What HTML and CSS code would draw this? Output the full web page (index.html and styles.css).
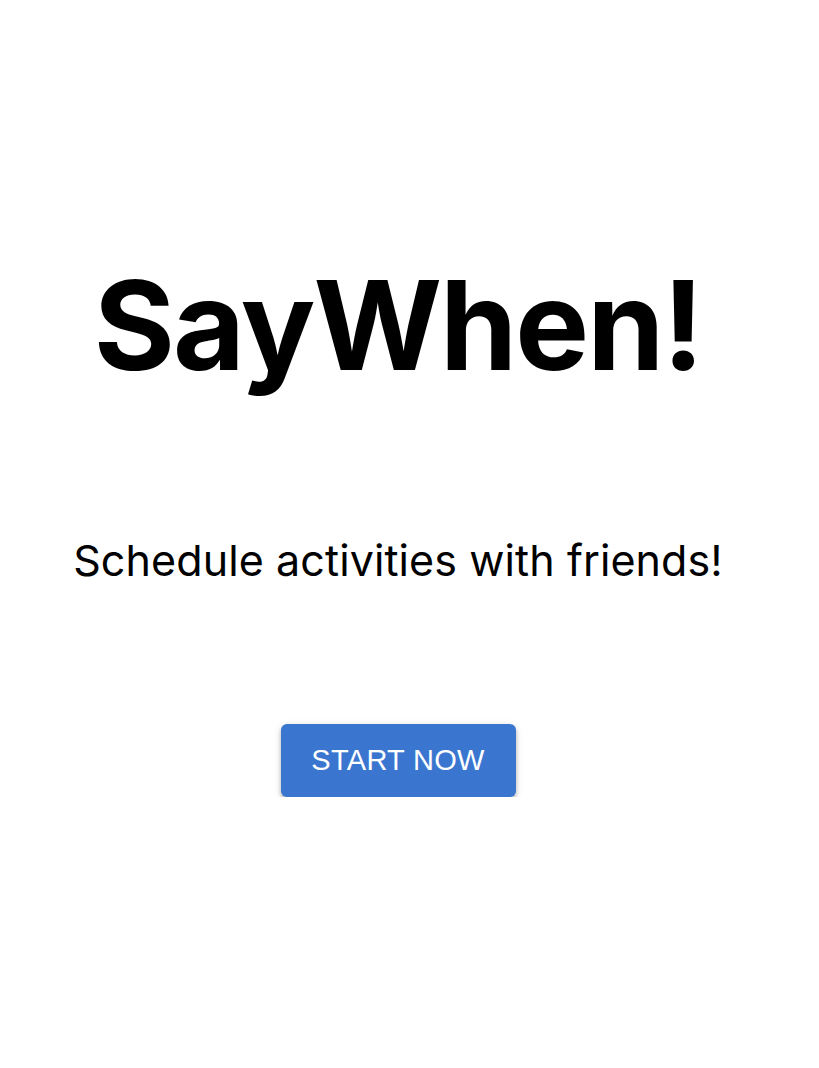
FILE: index.html
```html
<!DOCTYPE html>
<html>
<head>
<meta charset="utf-8">
<link rel="stylesheet" href="styles.css">
</head>
<body>
<main class="landing">
  <h1 class="title">SayWhen!</h1>
  <p class="tagline">Schedule activities with friends!</p>
  <button class="start">START NOW</button>
</main>
</body>
</html>
```

FILE: styles.css
```css
html, body {
  margin: 0;
  padding: 0;
  background: #ffffff;
}
.landing {
  display: flex;
  flex-direction: column;
  align-items: center;
  padding-top: 250px;
  padding-right: 23px;
  color: #000;
}
.title {
  margin: 0;
  font-family: Inter, "Liberation Sans", sans-serif;
  font-weight: 700;
  font-size: 124px;
  line-height: 150px;
  letter-spacing: -2px;
}
.tagline {
  margin: 134px 0 0 0;
  font-family: Inter, "Liberation Sans", sans-serif;
  font-weight: 400;
  font-size: 43px;
  line-height: 52px;
  letter-spacing: 0.1px;
}
.start {
  margin-top: 138px;
  width: 235px;
  height: 73px;
  border: none;
  border-radius: 6px;
  background: #3a76cf;
  color: #fff;
  font-family: "Liberation Sans", Arial, sans-serif;
  font-size: 29px;
  letter-spacing: 0.3px;
  box-shadow: 0 3px 4px rgba(0,0,0,0.25), 0 1px 8px rgba(0,0,0,0.1);
  cursor: pointer;
}
```
